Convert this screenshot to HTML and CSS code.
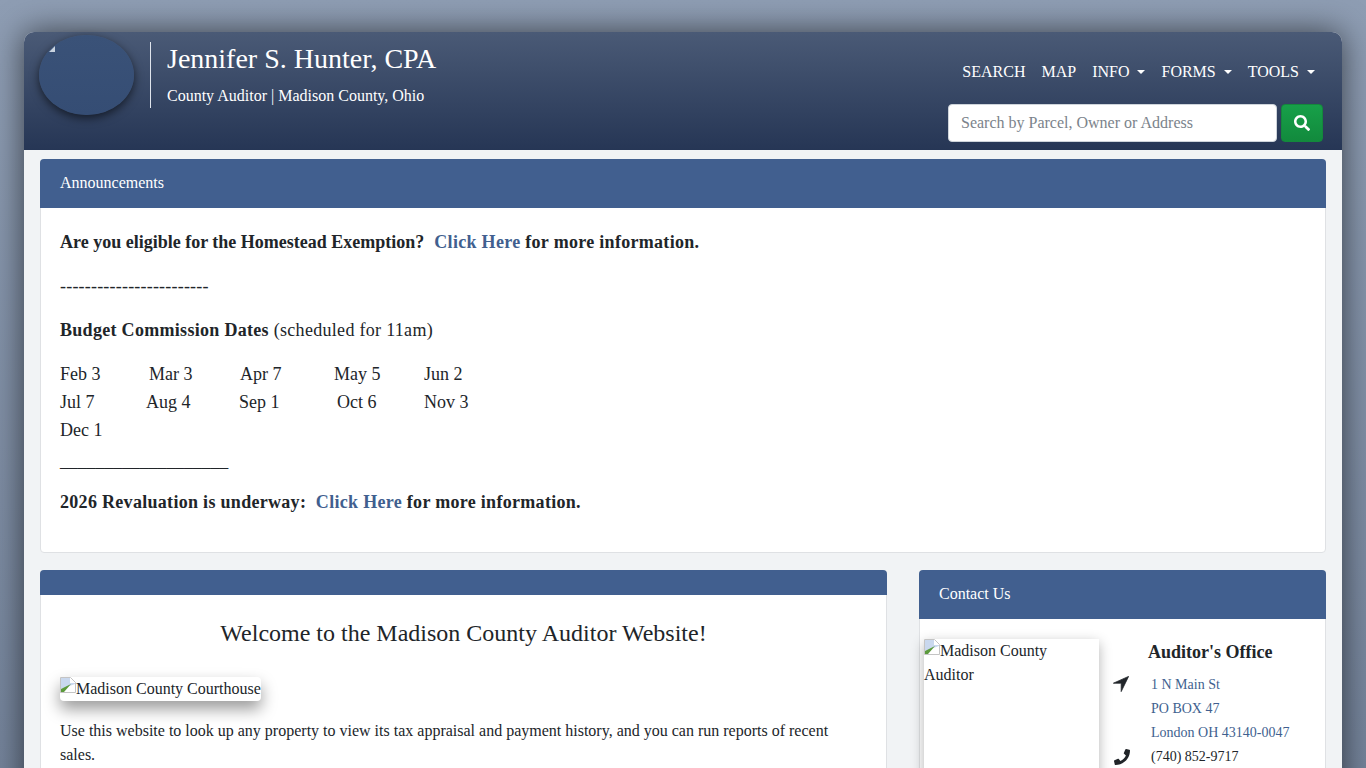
FILE: index.html
```html
<!DOCTYPE html>
<html lang="en">
<head>
  <meta charset="UTF-8" />
  <meta name="viewport" content="width=device-width, initial-scale=1.0" />
  <title>Madison County Auditor</title>
  <link rel="stylesheet" href="styles.css">
</head>
<body>
  <div class="page">
    <header class="site-header">
      <div class="brand">
        <div class="seal">
          <svg class="seal-broken" viewBox="0 0 16 16" aria-hidden="true"><path d="M0 6 6 0v6z" fill="#c9d3df"/></svg>
        </div>
        <div class="brand-text">
          <div class="brand-name">Jennifer S. Hunter, CPA</div>
          <div class="brand-sub">County Auditor | Madison County, Ohio</div>
        </div>
      </div>
      <div class="header-right">
        <nav class="main-nav">
          <a href="#">SEARCH</a>
          <a href="#">MAP</a>
          <a href="#" class="has-caret">INFO</a>
          <a href="#" class="has-caret">FORMS</a>
          <a href="#" class="has-caret">TOOLS</a>
        </nav>
        <form class="search-form">
          <input type="text" class="search-input" placeholder="Search by Parcel, Owner or Address">
          <button type="button" class="search-btn" aria-label="Search">
            <svg viewBox="0 0 512 512" width="16" height="16"><path fill="#fff" d="M505 442.700 405.300 343c-4.500-4.500-10.600-7-17-7H372c27.600-35.300 44-79.700 44-128C416 93.100 322.900 0 208 0S0 93.100 0 208s93.100 208 208 208c48.300 0 92.700-16.400 128-44v16.300c0 6.400 2.500 12.500 7 17l99.700 99.700c9.400 9.400 24.600 9.400 33.900 0l28.300-28.300c9.400-9.400 9.400-24.600.1-34zM208 336c-70.700 0-128-57.200-128-128 0-70.700 57.200-128 128-128 70.700 0 128 57.200 128 128 0 70.700-57.200 128-128 128z"/></svg>
          </button>
        </form>
      </div>
    </header>

    <main class="content">
      <section class="card">
        <div class="card-head">Announcements</div>
        <div class="card-body announce">
          <p><strong>Are you eligible for the Homestead Exemption?&nbsp; <span class="wide after-gap"><a href="#">Click Here</a> for more information.</span></strong></p>
          <p class="dashes">------------------------</p>
          <p class="wide"><strong>Budget Commission Dates</strong> (scheduled for 11am)</p>
          <div class="dates">
            <span>Feb 3</span><span>Mar 3</span><span>Apr 7</span><span>May 5</span><span>Jun 2</span>
            <span>Jul 7</span><span class="nudge-left">Aug 4</span><span class="nudge-sep">Sep 1</span><span class="nudge-right">Oct 6</span><span>Nov 3</span>
            <span>Dec 1</span>
          </div>
          <p class="rule-line">___________________</p>
          <p class="wide"><strong>2026 Revaluation is underway:&nbsp; <a href="#">Click Here</a> for more information.</strong></p>
        </div>
      </section>

      <div class="columns">
        <section class="card welcome">
          <div class="card-head slim"></div>
          <div class="card-body">
            <h2 class="welcome-title">Welcome to the Madison County Auditor Website!</h2>
            <div class="broken-img courthouse">
              <svg class="broken-icon" viewBox="0 0 16 16" aria-hidden="true"><path d="M.5.5h10l5 5v10H.5z" fill="#fff" stroke="#c4c4c4"/><path d="M1 1h9v5h5v1L1 12z" fill="#c9d8ee"/><path d="M1 15v-3L11 7l-7 8z" fill="#5c9a3c"/></svg>Madison County Courthouse
            </div>
            <p class="intro">Use this website to look up any property to view its tax appraisal and payment history, and you can run reports of recent sales.</p>
          </div>
        </section>

        <section class="card contact">
          <div class="card-head">Contact Us</div>
          <div class="contact-body">
            <div class="broken-img auditor-photo">
              <svg class="broken-icon" viewBox="0 0 16 16" aria-hidden="true"><path d="M.5.5h10l5 5v10H.5z" fill="#fff" stroke="#c4c4c4"/><path d="M1 1h9v5h5v1L1 12z" fill="#c9d8ee"/><path d="M1 15v-3L11 7l-7 8z" fill="#5c9a3c"/></svg>Madison County Auditor
            </div>
            <div class="office">
              <h3>Auditor's Office</h3>
              <div class="office-row">
                <svg class="office-icon arrow-icon" viewBox="0 0 16 16"><path fill="#212529" stroke="#212529" stroke-width="0.8" stroke-linejoin="round" d="M15.600.400.400 7.200h7.400l.4.4v8z"/></svg>
                <div class="office-lines"><a href="#">1 N Main St</a><a href="#">PO BOX 47</a><a href="#">London OH 43140-0047</a></div>
              </div>
              <div class="office-row">
                <svg class="office-icon" viewBox="0 0 512 512"><path fill="#212529" d="M493.400 24.600l-104-24c-11.300-2.600-22.900 3.300-27.500 13.900l-48 112c-4.200 9.800-1.400 21.300 6.900 28l60.600 49.600c-36 76.700-98.900 140.500-177.200 177.200l-49.600-60.600c-6.800-8.300-18.200-11.100-28-6.900l-112 48C3.900 366.500-2 378.100.6 389.400l24 104C27.100 504.200 36.700 512 48 512c256.100 0 464-207.500 464-464 0-11.200-7.700-20.900-18.600-23.400z"/></svg>
                <div class="office-lines"><span>(740) 852-9717</span></div>
              </div>
            </div>
          </div>
        </section>
      </div>
    </main>
  </div>
</body>
</html>
```

FILE: styles.css
```css
html, body {
  height: 100%;
}

body {
  margin: 0;
  overflow: hidden;
  font-family: "Liberation Serif", "Times New Roman", serif;
  font-size: 16px;
  line-height: 1.5;
  color: #212529;
  background: linear-gradient(#8e9db3, #74839a) no-repeat;
  padding: 32px 24px 0;
  box-sizing: border-box;
}

a {
  color: #415f8f;
  text-decoration: none;
}

.page {
  background: #f1f3f5;
  border-radius: 10px 10px 0 0;
  box-shadow: 0 0 32px rgba(0, 0, 0, 0.6);
  min-height: 800px;
}

/* header */
.site-header {
  height: 118px;
  display: flex;
  justify-content: space-between;
  border-radius: 10px 10px 0 0;
  background: linear-gradient(#4a5a76, #263655);
  color: #fff;
}

.brand {
  display: flex;
  align-items: flex-start;
  padding: 3px 0 0 15px;
}

.seal {
  width: 95px;
  height: 80px;
  border-radius: 50%;
  background: linear-gradient(#3a5278, #354d74);
  box-shadow: 0 3px 10px rgba(0, 0, 0, 0.6);
  overflow: hidden;
}

.seal-broken {
  width: 16px;
  height: 16px;
  display: block;
  margin: 11px 0 0 10px;
}

.brand-text {
  margin: 7px 0 0 16px;
  padding-left: 16px;
  height: 66px;
  border-left: 1px solid #dfe4ec;
}

.brand-name {
  font-size: 28px;
  line-height: 34px;
}

.brand-sub {
  font-size: 16px;
  line-height: 22px;
  margin-top: 9px;
}

.header-right {
  display: flex;
  flex-direction: column;
  align-items: flex-end;
  padding: 28px 19px 0 0;
}

.main-nav {
  display: flex;
  gap: 16px;
  padding-right: 8px;
}

.main-nav a {
  color: #fff;
  font-size: 16px;
  line-height: 24px;
}

.has-caret::after {
  content: "";
  display: inline-block;
  margin-left: 8px;
  vertical-align: 3px;
  border-top: 4px solid #fff;
  border-left: 4px solid transparent;
  border-right: 4px solid transparent;
}

.search-form {
  display: flex;
  gap: 4px;
  margin-top: 20px;
}

.search-input {
  width: 329px;
  height: 38px;
  box-sizing: border-box;
  padding: 0 12px;
  border: 1px solid #ced4da;
  border-radius: 4px;
  font-family: inherit;
  font-size: 16px;
}

.search-input::placeholder {
  color: #7b838b;
}

.search-btn {
  width: 42px;
  height: 38px;
  padding: 0;
  border: 1px solid #14883c;
  border-radius: 4px;
  background: linear-gradient(#17a049, #128a3d);
  display: flex;
  align-items: center;
  justify-content: center;
}

/* cards */
.content {
  padding: 9px 16px 0;
}

.card {
  background: #fff;
  border: 1px solid #dfe1e4;
  border-radius: 4px;
}

.card-head {
  height: 49px;
  box-sizing: border-box;
  padding: 12px 20px;
  margin: -1px -1px 0;
  background: #415f8f;
  border-radius: 4px 4px 0 0;
  color: #fff;
  font-size: 16px;
}

.card-head.slim {
  height: 25px;
  padding: 0;
}

.card-body {
  padding: 20px 19px;
}

.announce {
  font-size: 18px;
}

.announce p {
  margin: 0 0 16px;
  line-height: 28px;
}

.announce a {
  color: #415f8f;
}

.wide {
  letter-spacing: 0.3px;
}

.after-gap {
  margin-left: 1px;
}

.announce .dashes {
  letter-spacing: 0.2px;
}

.dates {
  display: grid;
  grid-template-columns: 89px 91px 94px 90px auto;
  justify-content: start;
  line-height: 28px;
}

.nudge-left {
  margin-left: -3px;
}

.nudge-sep {
  margin-left: -1px;
}

.nudge-right {
  margin-left: 3px;
}

.announce .rule-line {
  margin: 3px 0 13px;
  letter-spacing: -0.15px;
}

.columns {
  display: grid;
  grid-template-columns: 847px 407px;
  gap: 32px;
  margin-top: 17px;
}

.welcome-title {
  margin: 4px 0 29px;
  text-align: center;
  font-size: 24px;
  font-weight: 400;
  line-height: 29px;
}

.broken-img {
  background: #fff;
  box-shadow: 0 8px 16px rgba(0, 0, 0, 0.4);
}

.broken-icon {
  width: 16px;
  height: 16px;
  vertical-align: top;
}

.courthouse {
  display: inline-block;
  border-radius: 4px;
  line-height: 24px;
  margin-bottom: 18px;
}

.intro {
  margin: 0;
  font-size: 16px;
  line-height: 24px;
}

.contact-body {
  display: flex;
  padding: 20px 0 0 4px;
}

.auditor-photo {
  width: 175px;
  height: 300px;
  flex: none;
  box-shadow: 0 4px 12px rgba(0, 0, 0, 0.3);
}

.office {
  margin-left: 14px;
}

.office h3 {
  margin: 0 0 8px 35px;
  font-size: 18px;
  line-height: 26px;
}

.office-row {
  display: flex;
  font-size: 14px;
  line-height: 24px;
}

.office-icon {
  width: 16px;
  height: 16px;
  margin: 4px 21px 0 1px;
  flex: none;
}

.arrow-icon {
  margin: 3px 22px 0 0;
}

.office-lines a,
.office-lines span {
  display: block;
}
```
